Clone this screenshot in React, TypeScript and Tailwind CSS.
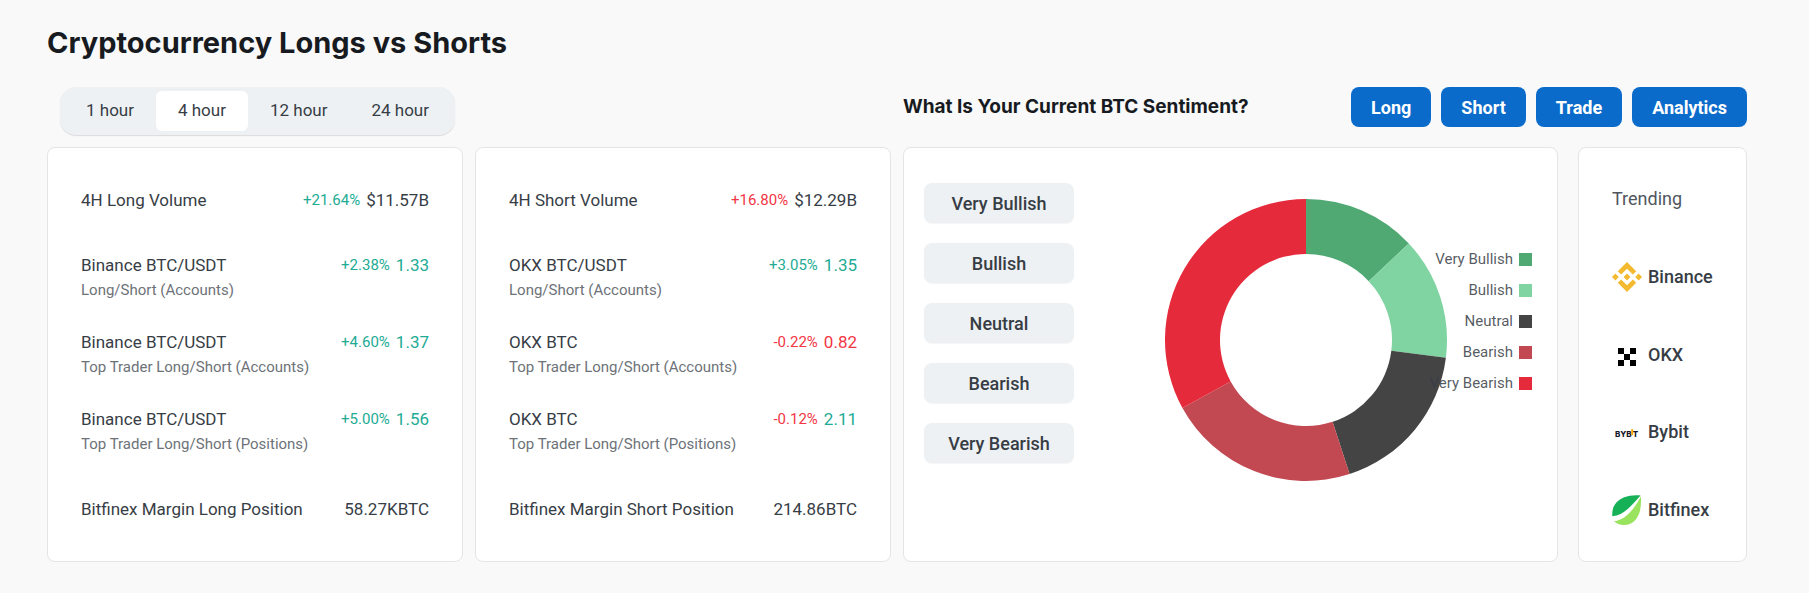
import { useState } from "react";
import type { ReactNode } from "react";

type Tone = "up" | "down" | "plain";

type Stat = {
  label: string;
  note?: string;
  change?: string;
  changeTone?: Tone;
  value: string;
  valueTone?: Tone;
};

const PERIODS = ["1 hour", "4 hour", "12 hour", "24 hour"];

const LONGS: Stat[] = [
  { label: "4H Long Volume", change: "+21.64%", changeTone: "up", value: "$11.57B" },
  { label: "Binance BTC/USDT", note: "Long/Short (Accounts)", change: "+2.38%", changeTone: "up", value: "1.33", valueTone: "up" },
  { label: "Binance BTC/USDT", note: "Top Trader Long/Short (Accounts)", change: "+4.60%", changeTone: "up", value: "1.37", valueTone: "up" },
  { label: "Binance BTC/USDT", note: "Top Trader Long/Short (Positions)", change: "+5.00%", changeTone: "up", value: "1.56", valueTone: "up" },
  { label: "Bitfinex Margin Long Position", value: "58.27KBTC" },
];

const SHORTS: Stat[] = [
  { label: "4H Short Volume", change: "+16.80%", changeTone: "down", value: "$12.29B" },
  { label: "OKX BTC/USDT", note: "Long/Short (Accounts)", change: "+3.05%", changeTone: "up", value: "1.35", valueTone: "up" },
  { label: "OKX BTC", note: "Top Trader Long/Short (Accounts)", change: "-0.22%", changeTone: "down", value: "0.82", valueTone: "down" },
  { label: "OKX BTC", note: "Top Trader Long/Short (Positions)", change: "-0.12%", changeTone: "down", value: "2.11", valueTone: "up" },
  { label: "Bitfinex Margin Short Position", value: "214.86BTC" },
];

const SENTIMENTS = [
  { name: "Very Bullish", share: 13, color: "#50a973" },
  { name: "Bullish", share: 14, color: "#7fd4a1" },
  { name: "Neutral", share: 18, color: "#444444" },
  { name: "Bearish", share: 22, color: "#c24852" },
  { name: "Very Bearish", share: 33, color: "#e52a3b" },
];

const TONES: Record<Tone, string> = {
  up: "text-[#22ab94]",
  down: "text-[#f23645]",
  plain: "text-[#373d45]",
};

function Card({ className = "", children }: { className?: string; children: ReactNode }) {
  return (
    <section className={`rounded-lg border border-[#e4e5e7] bg-white ${className}`}>
      {children}
    </section>
  );
}

function StatRow({ stat }: { stat: Stat }) {
  return (
    <div>
      <div className="flex items-center justify-between leading-6">
        <span>{stat.label}</span>
        <span className="flex items-center gap-[6px]">
          {stat.change && (
            <span className={`text-[15px] ${TONES[stat.changeTone ?? "plain"]}`}>{stat.change}</span>
          )}
          <span className={TONES[stat.valueTone ?? "plain"]}>{stat.value}</span>
        </span>
      </div>
      {stat.note && <p className="text-[15px] leading-[26px] text-[#6d7278]">{stat.note}</p>}
    </div>
  );
}

function StatCard({ stats }: { stats: Stat[] }) {
  return (
    <Card className="px-[33px] py-10 text-[17px]">
      <StatRow stat={stats[0]} />
      <div className="mt-[41px] mb-10 flex flex-col gap-[27px]">
        {stats.slice(1, -1).map((stat) => (
          <StatRow key={stat.note} stat={stat} />
        ))}
      </div>
      <StatRow stat={stats[stats.length - 1]} />
    </Card>
  );
}

function slicePath(from: number, to: number) {
  const point = (pct: number, r: number) => {
    const a = (pct / 100) * Math.PI * 2;
    return `${142 + r * Math.sin(a)} ${142 - r * Math.cos(a)}`;
  };
  return `M${point(from, 141)}A141 141 0 0 1 ${point(to, 141)}L${point(to, 86)}A86 86 0 0 0 ${point(from, 86)}Z`;
}

function Donut() {
  let start = 0;
  return (
    <svg viewBox="0 0 284 284" className="size-[284px]" role="img" aria-label="BTC sentiment">
      {SENTIMENTS.map((s) => {
        const from = start;
        start += s.share;
        return <path key={s.name} d={slicePath(from, start)} fill={s.color} />;
      })}
    </svg>
  );
}

function BinanceLogo() {
  return (
    <svg viewBox="0 0 126.6 126.6" className="size-[30px]" fill="#f3ba2f" aria-hidden="true">
      <path d="M38.7 53.2 63.3 28.6 87.9 53.2 102.2 38.9 63.3 0 24.4 38.9z" />
      <path d="M0 63.3 14.3 49 28.6 63.3 14.3 77.6z" />
      <path d="M38.7 73.4 63.3 98 87.9 73.4 102.2 87.7 63.3 126.6 24.4 87.7z" />
      <path d="M98 63.3 112.3 49 126.6 63.3 112.3 77.6z" />
      <path d="M77.8 63.3 63.3 48.8 48.8 63.3 63.3 77.8z" />
    </svg>
  );
}

function OkxLogo() {
  return (
    <svg viewBox="0 0 30 30" className="size-[30px]" aria-hidden="true">
      <path d="M6 8h6v6H6zM18 8h6v6h-6zM12 14h6v6h-6zM6 20h6v6H6zM18 20h6v6h-6z" />
    </svg>
  );
}

function BybitLogo() {
  return (
    <svg viewBox="0 0 30 30" className="size-[30px]" aria-hidden="true">
      <g fontFamily="Inter, sans-serif" fontWeight="800" fontSize="8" fill="#15192a">
        <text x="3" y="20">BYB</text>
        <text x="20.8" y="20">T</text>
      </g>
      <path d="M19.2 12.2h2v6h-2z" fill="#f7a600" />
    </svg>
  );
}

function BitfinexLogo() {
  return (
    <svg viewBox="0 0 30 30" className="size-[30px]" aria-hidden="true">
      <path d="M28.6.4C17-.6 8.6 2.6 4.2 7.8.7 12 0 16.4.3 21.3c6.3-.7 10.7-3.1 15.4-7.3C20.5 9.7 24.7 4.3 28.6.4z" fill="#16b157" />
      <path d="M29 1.2c.4 9.4-.6 16.8-4.4 22.2C21.4 28 16.8 30.2 11.7 30c-4-.1-7.3-1.5-9.7-3.7 6-.6 10.9-3.7 15.5-8.5C22.4 12.7 26 7 29 1.2z" fill="#9ae35e" />
    </svg>
  );
}

const EXCHANGES = [
  { name: "Binance", Logo: BinanceLogo },
  { name: "OKX", Logo: OkxLogo },
  { name: "Bybit", Logo: BybitLogo },
  { name: "Bitfinex", Logo: BitfinexLogo },
];

export default function App() {
  const [period, setPeriod] = useState("4 hour");

  return (
    <main className="min-h-screen bg-[#f9f9f9] pt-6 pr-[62px] pb-7 pl-[47px] font-[Roboto,sans-serif] text-[18px] text-[#373d45]">
      <h1 className="font-[Inter,sans-serif] text-[29px] leading-[38px] font-bold text-[#171b1f]">
        Cryptocurrency Longs vs Shorts
      </h1>

      <div className="mt-[25px] grid grid-cols-2 gap-3">
        <div>
          <div className="ml-[13px] inline-flex rounded-2xl bg-[#eef1f4] p-1 text-[17px] shadow-[0_1px_1px_rgba(0,0,0,0.12)]">
            {PERIODS.map((p) => (
              <button
                key={p}
                type="button"
                aria-pressed={p === period}
                onClick={() => setPeriod(p)}
                className={`h-10 rounded-md px-[22px] ${p === period ? "bg-white" : ""}`}
              >
                {p}
              </button>
            ))}
          </div>
        </div>
        <div className="flex items-start justify-between">
          <h2 className="font-[Inter,sans-serif] text-[19px] leading-10 font-bold text-[#171b1f]">
            What Is Your Current BTC Sentiment?
          </h2>
          <div className="flex gap-[10px]">
            {["Long", "Short", "Trade", "Analytics"].map((name) => (
              <button key={name} type="button" className="h-10 rounded-lg bg-[#0b6bcb] px-5 font-bold text-white">
                {name}
              </button>
            ))}
          </div>
        </div>

        <div className="grid grid-cols-2 gap-3">
          <StatCard stats={LONGS} />
          <StatCard stats={SHORTS} />
        </div>

        <div className="flex gap-5">
          <Card className="relative flex flex-1 items-start px-5">
            <div className="flex flex-col gap-5 pt-[35px]">
              {SENTIMENTS.map((s) => (
                <button
                  key={s.name}
                  type="button"
                  className="h-10 w-[150px] rounded-lg bg-[#eef1f4] font-medium shadow-[0_1px_1px_rgba(0,0,0,0.04)]"
                >
                  {s.name}
                </button>
              ))}
            </div>
            <div className="flex flex-1 justify-center pt-[50px]">
              <Donut />
            </div>
            <ul className="absolute top-24 right-[25px] text-[15px] text-[#373d45]/85">
              {SENTIMENTS.map((s) => (
                <li key={s.name} className="flex h-[31px] items-center justify-end gap-[6px]">
                  {s.name}
                  <span className="size-[13px]" style={{ backgroundColor: s.color }} />
                </li>
              ))}
            </ul>
          </Card>

          <Card className="flex w-[169px] flex-col justify-between py-9 pl-[33px]">
            <h3 className="leading-[30px] text-[#50565d]">Trending</h3>
            {EXCHANGES.map(({ name, Logo }) => (
              <a key={name} href={`#${name.toLowerCase()}`} className="flex items-center gap-[6px] leading-[30px] font-medium">
                <Logo />
                {name}
              </a>
            ))}
          </Card>
        </div>
      </div>
    </main>
  );
}
